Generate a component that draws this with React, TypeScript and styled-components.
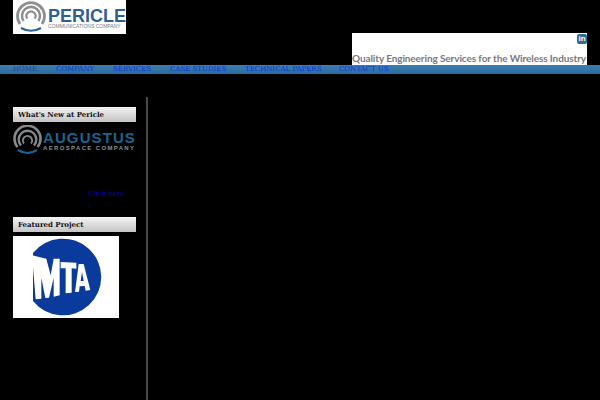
import React from "react";
import styled, { createGlobalStyle } from "styled-components";

const Global = createGlobalStyle`
  html, body { margin: 0; padding: 0; background: #000; overflow: hidden; }
  body { font-family: "DejaVu Serif", serif; width: 600px; height: 400px; }
  #root { height: 400px; }
`;
const Page = styled.div`
  width: 600px; height: 400px; display: flex; flex-direction: column; background: #000; overflow: hidden;
`;
const Header = styled.header`
  height: 65px; display: flex; justify-content: space-between; padding: 0 13px; box-sizing: border-box;
`;
const Logo = styled.svg`
  width: 113px; height: 34px; display: block; background: #fff;
`;
const Banner = styled.div`
  width: 235px; height: 32px; margin-top: 33px; background: #fff; position: relative; display: flex; align-items: flex-end; overflow: hidden;
`;
const Tagline = styled.span`
  font-family: "Lato", "Liberation Sans", sans-serif; font-size: 10px; font-weight: 700; letter-spacing: -0.1px; color: #77787a; white-space: nowrap; line-height: 13px;
`;
const LinkedIn = styled.span`
  position: absolute; top: 1px; right: 0; width: 10px; height: 10px; background: #2b6f95; border-radius: 2px; color: #fff; font: bold 8px/10px "Liberation Sans", sans-serif; text-align: center;
`;
const Nav = styled.nav`
  height: 9px; background: linear-gradient(#3d7fb3, #2c6a9c); display: flex; align-items: center; padding-left: 13px;
`;
const NavLink = styled.a<{ $w: number; $active?: boolean }>`
  width: ${p => p.$w}px; flex: none; font-size: 7px; line-height: 9px; white-space: nowrap; color: ${p => (p.$active ? "#24488f" : "#0a33d8")};
`;
const Main = styled.main`
  flex: 1; display: flex; padding: 23px 0 0 13px; min-height: 0;
`;
const Side = styled.aside`
  width: 123px; padding-top: 10px; padding-right: 10px; border-right: 2px solid #4a4a4a;
`;
const SideTitle = styled.h3`
  margin: 0; height: 15px; padding-left: 5px; font-size: 7px; line-height: 15px; font-weight: bold; color: #111;
  background: linear-gradient(#f4f4f4, #c4c4c4);
`;
const Augustus = styled.svg`
  display: block; width: 123px; height: 32px; margin-top: 3px;
`;
const ClickRow = styled.div`
  height: 16px; margin-top: 24px; margin-bottom: 20px; padding-left: 75px;
`;
const ClickLink = styled.a`
  font-size: 7px; line-height: 16px; color: #0000c0;
`;
const Mta = styled.svg`
  display: block; width: 106px; height: 82px; margin-top: 4px; background: #fff;
`;

const navItems: [string, number][] = [["HOME", 43], ["COMPANY", 57], ["SERVICES", 57], ["CASE STUDIES", 75], ["TECHNICAL PAPERS", 94], ["CONTACT US", 60]];

export default function App() {
  return (
    <Page>
      <Global />
      <Header>
        <Logo viewBox="0 0 113 34">
          <g fill="none" stroke="#8d8f91">
            <path d="M7 24 A13.5 13.5 0 1 1 29 24" strokeWidth="2.8" />
            <path d="M10.6 21 A9 9 0 1 1 25.4 21" strokeWidth="2.6" />
            <path d="M14.3 18.6 A4.5 4.5 0 1 1 21.7 18.6" strokeWidth="2.2" />
          </g>
          <path d="M8 28 Q18 33.5 28 28" fill="none" stroke="#2b6497" strokeWidth="2.2" />
          <text x="35" y="22" fontFamily="Liberation Sans, sans-serif" fontWeight="bold" fontSize="18" fill="#2f5f93">PERICLE</text>
          <text x="35" y="27.5" fontFamily="Liberation Sans, sans-serif" fontSize="5" fill="#77797b">COMMUNICATIONS COMPANY</text>
        </Logo>
        <Banner>
          <Tagline>Quality Engineering Services for the Wireless Industry</Tagline>
          <LinkedIn>in</LinkedIn>
        </Banner>
      </Header>
      <Nav>
        {navItems.map(([t, w], i) => <NavLink key={t} $w={w} $active={i === 0}>{t}</NavLink>)}
      </Nav>
      <Main>
        <Side>
          <SideTitle>What's New at Pericle</SideTitle>
          <Augustus viewBox="0 0 123 32">
            <g fill="none" stroke="#85888a">
              <path d="M4.5 22 A13 13 0 1 1 24.5 22" strokeWidth="2.6" />
              <path d="M8 20.5 A8.8 8.8 0 1 1 21 20.5" strokeWidth="2.4" />
              <path d="M11 18.5 A4.6 4.6 0 1 1 18 18.5" strokeWidth="2" />
            </g>
            <path d="M5 25 Q14.5 31 24 25" fill="none" stroke="#1f5f8f" strokeWidth="2.2" />
            <text x="30" y="17.5" fontFamily="Liberation Sans, sans-serif" fontWeight="bold" fontSize="15" letterSpacing="1.1" fill="#1a648f">AUGUSTUS</text>
            <text x="30" y="25" fontFamily="Liberation Sans, sans-serif" fontWeight="bold" fontSize="6" letterSpacing="1.35" fill="#8b8e90">AEROSPACE COMPANY</text>
          </Augustus>
          <ClickRow><ClickLink>Click here</ClickLink></ClickRow>
          <SideTitle>Featured Project</SideTitle>
          <Mta viewBox="0 0 318 246">
            <path d="M60 51 A115 115 0 1 1 60 195 Z" fill="#0a3a9c" />
            <path d="M57 58 L100 68 L113 118 L122 68 L140 68 L140 178 L122 182 L122 125 L108 185 L97 186 L85 125 L85 188 L68 190 Z" fill="#fff" />
            <path d="M143 78 L190 80 L190 98 L176 97 L176 170 L158 172 L158 97 L143 97 Z" fill="#fff" />
            <path d="M197 84 L212 84 L232 162 L218 164 L215 150 L200 151 L198 167 L186 168 Z M203 135 L212 135 L207 108 Z" fill="#fff" fillRule="evenodd" />
          </Mta>
        </Side>
      </Main>
    </Page>
  );
}
